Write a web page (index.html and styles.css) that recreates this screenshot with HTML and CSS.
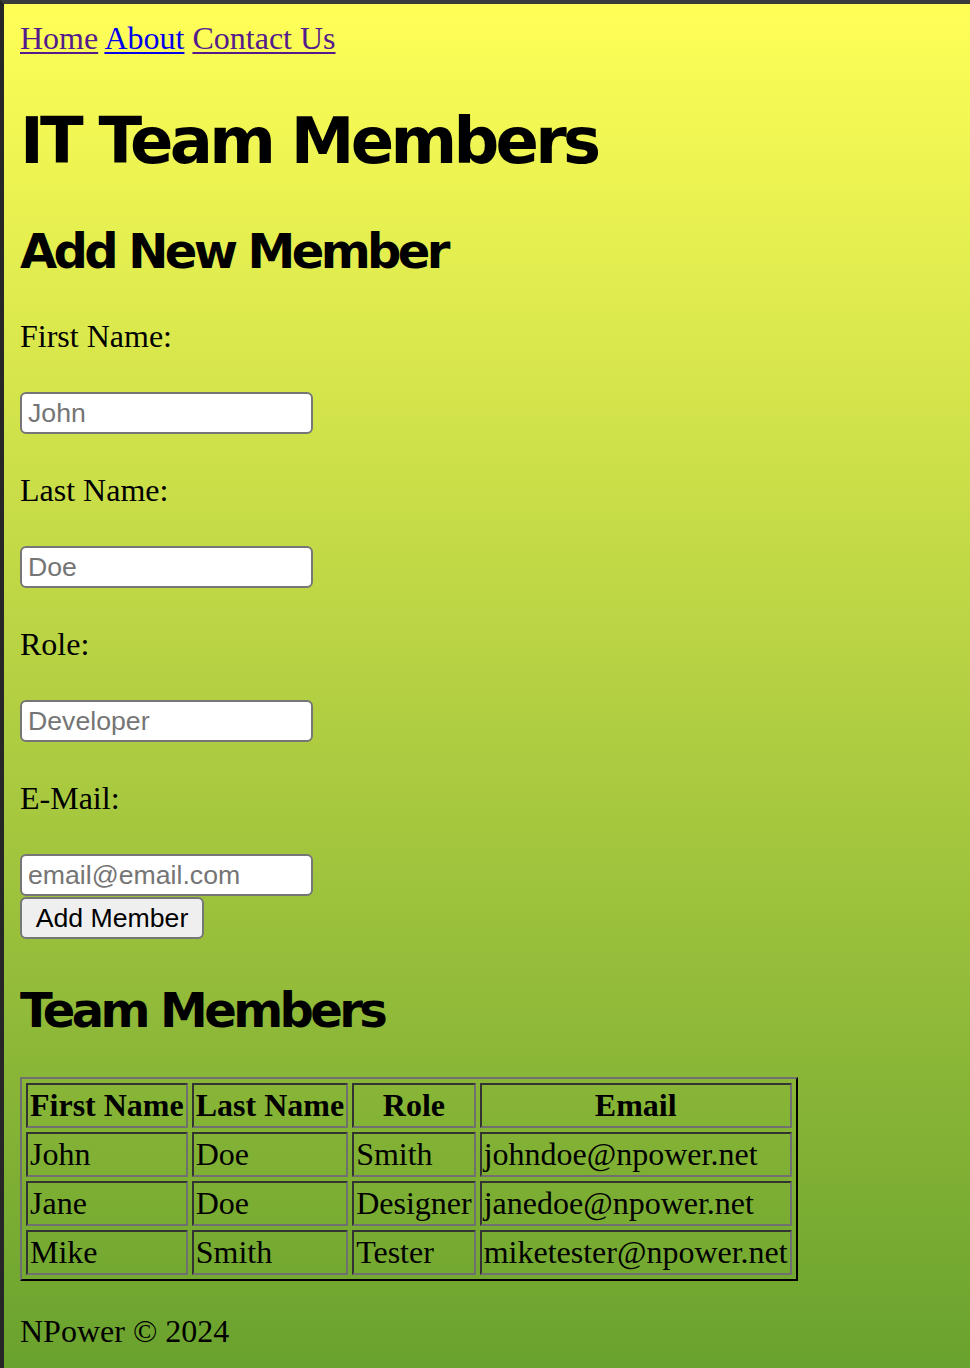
FILE: index.html
```html
<!DOCTYPE html>
<html lang="en">
<head>
<meta charset="utf-8">
<title>IT Team Members</title>
<link rel="stylesheet" href="styles.css">
</head>
<body>
<nav class="nav">
  <a href="#" class="visited">Home</a> <a href="#" class="fresh">About</a> <a href="#" class="visited">Contact Us</a>
</nav>
<h1 class="title">IT Team Members</h1>
<h2 class="section">Add New Member</h2>
<form class="member-form">
  <div class="field">
    <label class="field-label" for="fn">First Name:</label>
    <input class="field-input" id="fn" type="text" placeholder="John">
  </div>
  <div class="field">
    <label class="field-label" for="ln">Last Name:</label>
    <input class="field-input" id="ln" type="text" placeholder="Doe">
  </div>
  <div class="field">
    <label class="field-label" for="role">Role:</label>
    <input class="field-input" id="role" type="text" placeholder="Developer">
  </div>
  <div class="field">
    <label class="field-label" for="em">E-Mail:</label>
    <input class="field-input" id="em" type="email" placeholder="email@email.com">
  </div>
  <button class="add-btn" type="button">Add Member</button>
</form>
<h2 class="section section-team">Team Members</h2>
<table class="members">
  <thead>
    <tr><th>First Name</th><th>Last Name</th><th>Role</th><th>Email</th></tr>
  </thead>
  <tbody>
    <tr><td>John</td><td>Doe</td><td>Smith</td><td>johndoe@npower.net</td></tr>
    <tr><td>Jane</td><td>Doe</td><td>Designer</td><td>janedoe@npower.net</td></tr>
    <tr><td>Mike</td><td>Smith</td><td>Tester</td><td>miketester@npower.net</td></tr>
  </tbody>
</table>
<p class="footer">NPower &copy; 2024</p>
</body>
</html>
```

FILE: styles.css
```css
html {
  border-top: 4px solid #3b3b3b;
  border-left: 4px solid #262626;
  background: linear-gradient(to bottom, #ffff57 0%, #66a02d 100%);
  min-height: 100%;
}

body {
  margin: 16px;
  font-family: "Liberation Serif", "Times New Roman", serif;
  font-size: 32px;
  line-height: 37px;
  color: #000;
}

.nav {
  line-height: 37px;
}

.nav a {
  text-decoration: underline;
  text-decoration-thickness: 2px;
  text-underline-offset: 3px;
}

.nav a.visited {
  color: #551a8b;
}

.nav a.fresh {
  color: #0000ee;
}

.title {
  font-family: Tahoma, "DejaVu Sans", Verdana, sans-serif;
  font-size: 64px;
  font-weight: bold;
  letter-spacing: -0.058em;
  line-height: 72px;
  padding-top: 5px;
  margin: 43px 0;
}

.section {
  font-family: Tahoma, "DejaVu Sans", Verdana, sans-serif;
  font-size: 48px;
  font-weight: bold;
  letter-spacing: -0.075em;
  line-height: 54px;
  padding-top: 4px;
  margin: 40px 0;
}

.member-form {
  display: flex;
  flex-direction: column;
  align-items: flex-start;
  margin-top: 40px;
}

.field {
  display: flex;
  flex-direction: column;
  align-items: flex-start;
  gap: 37px;
}

.field + .field {
  margin-top: 38px;
}

.field-label {
  display: block;
  line-height: 37px;
}

.field-input {
  box-sizing: border-box;
  width: 293px;
  height: 42px;
  margin: 0;
  padding: 0 6px;
  border: 2px solid #767676;
  border-radius: 6px;
  background: #fff;
  font-family: "Liberation Sans", Arial, sans-serif;
  font-size: 26.67px;
  color: #000;
}

.field-input::placeholder {
  color: #757575;
}

.add-btn {
  box-sizing: border-box;
  margin-top: 1px;
  width: 184px;
  height: 42px;
  padding: 0 12px;
  border: 2px solid #767676;
  border-radius: 6px;
  background: #efefef;
  font-family: "Liberation Sans", Arial, sans-serif;
  font-size: 26.67px;
  color: #000;
}

.section-team {
  margin-top: 40px;
}

.members {
  border: 2px outset #808080;
  border-color: #707070 #333 #333 #707070;
  border-spacing: 4px;
  border-collapse: separate;
}

.members th,
.members td {
  border: 2px solid;
  border-color: #333 #707070 #707070 #333;
  padding: 2px;
  line-height: 37px;
}

.members th {
  font-weight: bold;
  text-align: center;
}

.members td {
  text-align: left;
}

.footer {
  margin: 32px 0;
  line-height: 37px;
}
```
